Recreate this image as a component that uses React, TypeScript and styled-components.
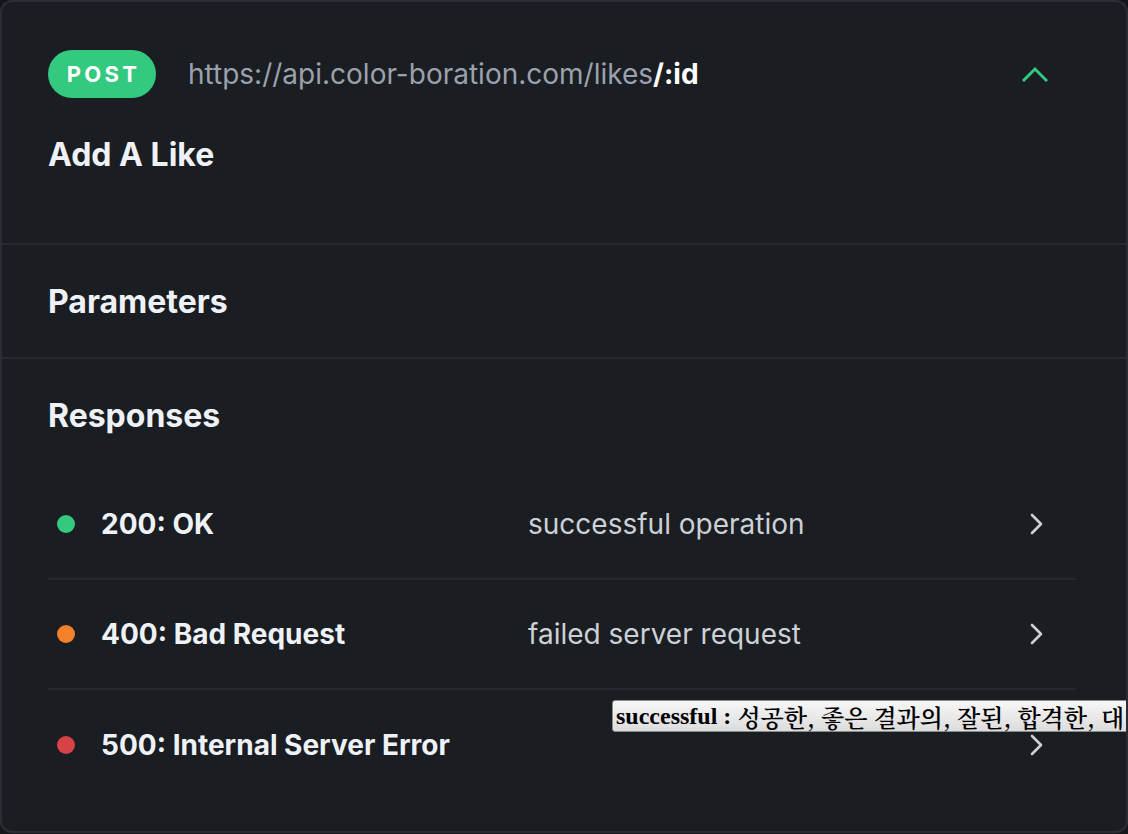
import React from "react";
import styled, { createGlobalStyle } from "styled-components";

const Global = createGlobalStyle`
  html, body { margin: 0; padding: 0; background: #15171b; overflow: hidden; }
  body { font-family: Inter, "Noto Sans", sans-serif; -webkit-font-smoothing: antialiased; }
  * { box-sizing: border-box; }
`;

const Card = styled.div`
  position: relative;
  width: 1128px;
  height: 833px;
  background: #1a1d21;
  border: 2px solid #2b2e36;
  border-radius: 12px;
  color: #eef2f7;
  overflow: hidden;
`;

const Section = styled.section<{ $pt: number; $pb: number; $divider?: boolean }>`
  padding: ${(p) => p.$pt}px 50px ${(p) => p.$pb}px 46px;
  border-bottom: ${(p) => (p.$divider ? "2px solid #262930" : "none")};
`;

const HeaderRow = styled.div`
  display: flex;
  align-items: center;
  gap: 32px;
  padding-right: 28px;
`;

const Badge = styled.span`
  display: inline-flex;
  align-items: center;
  justify-content: center;
  width: 108px;
  height: 48px;
  border-radius: 24px;
  background: #33c97f;
  color: #ffffff;
  font-weight: 700;
  font-size: 22px;
  letter-spacing: 3.3px;
  padding-left: 3px;
`;

const Url = styled.span`
  font-size: 28px;
  color: #9ba1ad;
  b { color: #ffffff; font-weight: 700; }
`;

const Toggle = styled.span`
  margin-left: auto;
  display: flex;
`;

const Title = styled.h2<{ $mt?: number }>`
  margin: ${(p) => p.$mt ?? 0}px 0 0 0;
  font-size: 32px;
  line-height: 34px;
  font-weight: 700;
  color: #eef2f7;
`;

const List = styled.div`
  margin-top: 37px;
`;

const Row = styled.div<{ $last?: boolean }>`
  display: grid;
  grid-template-columns: 18px 401px 1fr 14px;
  column-gap: 26px;
  align-items: center;
  height: 110px;
  padding: 0 32px 0 9px;
  border-bottom: ${(p) => (p.$last ? "none" : "2px solid #262930")};
`;

const Dot = styled.span<{ $c: string }>`
  width: 18px;
  height: 18px;
  border-radius: 50%;
  background: ${(p) => p.$c};
`;

const Code = styled.span`
  font-size: 28px;
  font-weight: 700;
  color: #eef2f7;
`;

const Desc = styled.span`
  font-size: 28px;
  color: #cdd1d7;
`;

const Tooltip = styled.div`
  position: absolute;
  left: 610px;
  top: 698px;
  width: 540px;
  height: 32px;
  padding: 0 0 0 3px;
  display: flex;
  align-items: center;
  white-space: nowrap;
  background: linear-gradient(#f7f7f7, #dcdcdc);
  border: 1.5px solid #8a8a8a;
  border-radius: 3px;
  font-family: "Liberation Serif", "Noto Serif CJK KR", "Noto Sans CJK KR", serif;
  font-weight: 700;
  font-size: 24px;
  color: #000;
  span { font-weight: 600; font-family: "Noto Serif CJK KR", "Noto Sans CJK KR", serif; }
`;

const ChevronUp = () => (
  <svg width="26" height="16" viewBox="0 0 26 16" fill="none">
    <polyline points="2,14 13,3 24,14" stroke="#33c97f" strokeWidth="3" strokeLinecap="square" />
  </svg>
);

const ChevronRight = () => (
  <svg width="14" height="22" viewBox="0 0 14 22" fill="none">
    <polyline points="2,2 11,11 2,20" stroke="#cdd1d7" strokeWidth="2.6" strokeLinecap="round" strokeLinejoin="round" />
  </svg>
);

const responses = [
  { code: "200: OK", desc: "successful operation", color: "#33c97f" },
  { code: "400: Bad Request", desc: "failed server request", color: "#f5822a" },
  { code: "500: Internal Server Error", desc: "", color: "#d64245" },
];

export default function App() {
  return (
    <>
      <Global />
      <Card>
        <Section $pt={48} $pb={71} $divider>
          <HeaderRow>
            <Badge>POST</Badge>
            <Url>
              https://api.color-boration.com/likes<b>/:id</b>
            </Url>
            <Toggle>
              <ChevronUp />
            </Toggle>
          </HeaderRow>
          <Title $mt={40}>Add A Like</Title>
        </Section>
        <Section $pt={40} $pb={38} $divider>
          <Title>Parameters</Title>
        </Section>
        <Section $pt={40} $pb={0}>
          <Title>Responses</Title>
          <List>
            {responses.map((r, i) => (
              <Row key={r.code} $last={i === responses.length - 1}>
                <Dot $c={r.color} />
                <Code>{r.code}</Code>
                <Desc>{r.desc}</Desc>
                <ChevronRight />
              </Row>
            ))}
          </List>
        </Section>
        <Tooltip>
          successful : <span>&nbsp;성공한, 좋은 결과의, 잘된, 합격한, 대</span>
        </Tooltip>
      </Card>
    </>
  );
}
